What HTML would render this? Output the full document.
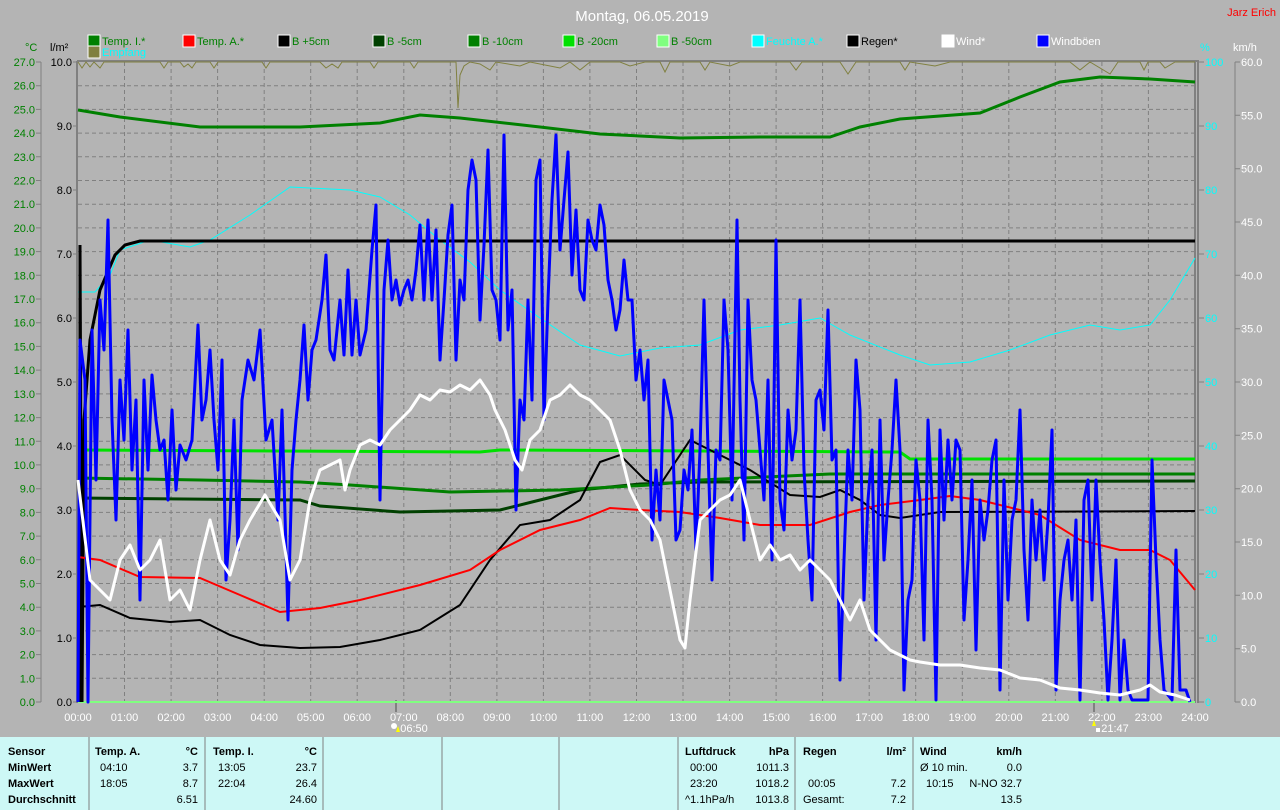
<!DOCTYPE html>
<html><head><meta charset="utf-8"><style>
html,body{margin:0;padding:0;background:#b4b4b4;}
svg{display:block;font-family:"Liberation Sans",Arial,sans-serif;}
</style></head><body>
<svg width="1280" height="810" viewBox="0 0 1280 810" xmlns="http://www.w3.org/2000/svg">
<rect width="1280" height="810" fill="#b4b4b4"/>
<text x="642" y="21" fill="#fff" font-size="15" text-anchor="middle">Montag, 06.05.2019</text>
<text x="1276" y="16" fill="#f00" font-size="11" text-anchor="end">Jarz Erich</text>
<g font-size="11">
<rect x="88" y="35" width="12" height="12" fill="#008000" stroke="#fff"/><text x="102" y="45" fill="#008000">Temp. I.*</text>
<rect x="183" y="35" width="12" height="12" fill="#f00" stroke="#fff"/><text x="197" y="45" fill="#008000">Temp. A.*</text>
<rect x="278" y="35" width="12" height="12" fill="#000" stroke="#fff"/><text x="292" y="45" fill="#008000">B +5cm</text>
<rect x="373" y="35" width="12" height="12" fill="#004000" stroke="#fff"/><text x="387" y="45" fill="#008000">B -5cm</text>
<rect x="468" y="35" width="12" height="12" fill="#008000" stroke="#fff"/><text x="482" y="45" fill="#008000">B -10cm</text>
<rect x="563" y="35" width="12" height="12" fill="#00e000" stroke="#fff"/><text x="577" y="45" fill="#008000">B -20cm</text>
<rect x="657" y="35" width="12" height="12" fill="#80ff80" stroke="#fff"/><text x="671" y="45" fill="#008000">B -50cm</text>
<rect x="752" y="35" width="12" height="12" fill="#0ff" stroke="#fff"/><text x="766" y="45" fill="#0ff">Feuchte A.*</text>
<rect x="847" y="35" width="12" height="12" fill="#000" stroke="#fff"/><text x="861" y="45" fill="#000">Regen*</text>
<rect x="942" y="35" width="12" height="12" fill="#fff" stroke="#fff"/><text x="956" y="45" fill="#fff">Wind*</text>
<rect x="1037" y="35" width="12" height="12" fill="#00f" stroke="#fff"/><text x="1051" y="45" fill="#fff">Windböen</text>
<rect x="88" y="46" width="12" height="12" fill="#808040" stroke="#fff"/><text x="102" y="56" fill="#0ff">Empfang</text>
<text x="25" y="51" fill="#008000">°C</text>
<text x="50" y="51" fill="#000">l/m²</text>
<text x="1200" y="51" fill="#0ff">%</text>
<text x="1233" y="51" fill="#fff">km/h</text>
</g>
<!-- axes lines -->
<path d="M41 62V702M1235 62V702" stroke="#808080" stroke-width="1"/>
<path d="M36 62h5M36 85.7h5M36 109.4h5M36 133.1h5M36 156.8h5M36 180.5h5M36 204.2h5M36 227.9h5M36 251.6h5M36 275.3h5M36 299h5M36 322.7h5M36 346.4h5M36 370.1h5M36 393.9h5M36 417.6h5M36 441.3h5M36 464.9h5M36 488.7h5M36 512.4h5M36 536.1h5M36 559.8h5M36 583.5h5M36 607.2h5M36 630.9h5M36 654.6h5M36 678.3h5M36 702h5M1235 62h5M1235 115.3h5M1235 168.7h5M1235 222h5M1235 275.3h5M1235 328.7h5M1235 382h5M1235 435.3h5M1235 488.7h5M1235 542h5M1235 595.3h5M1235 648.7h5M1235 702h5M73 62h4M73 126h4M73 190h4M73 254h4M73 318h4M73 382h4M73 446h4M73 510h4M73 574h4M73 638h4M73 702h4M1199 62h5M1199 126h5M1199 190h5M1199 254h5M1199 318h5M1199 382h5M1199 446h5M1199 510h5M1199 574h5M1199 638h5M1199 702h5" stroke="#808080"/>
<g font-size="11" fill="#008000" text-anchor="end">
<text x="35" y="66">27.0</text><text x="35" y="89.7">26.0</text><text x="35" y="113.4">25.0</text><text x="35" y="137.1">24.0</text><text x="35" y="160.8">23.0</text><text x="35" y="184.5">22.0</text><text x="35" y="208.2">21.0</text><text x="35" y="231.9">20.0</text><text x="35" y="255.6">19.0</text><text x="35" y="279.3">18.0</text><text x="35" y="303">17.0</text><text x="35" y="326.7">16.0</text><text x="35" y="350.4">15.0</text><text x="35" y="374.1">14.0</text><text x="35" y="397.9">13.0</text><text x="35" y="421.6">12.0</text><text x="35" y="445.3">11.0</text><text x="35" y="468.9">10.0</text><text x="35" y="492.7">9.0</text><text x="35" y="516.4">8.0</text><text x="35" y="540.1">7.0</text><text x="35" y="563.8">6.0</text><text x="35" y="587.5">5.0</text><text x="35" y="611.2">4.0</text><text x="35" y="634.9">3.0</text><text x="35" y="658.6">2.0</text><text x="35" y="682.3">1.0</text><text x="35" y="706">0.0</text>
</g>
<g font-size="11" fill="#000" text-anchor="end">
<text x="72" y="66">10.0</text><text x="72" y="130">9.0</text><text x="72" y="194">8.0</text><text x="72" y="258">7.0</text><text x="72" y="322">6.0</text><text x="72" y="386">5.0</text><text x="72" y="450">4.0</text><text x="72" y="514">3.0</text><text x="72" y="578">2.0</text><text x="72" y="642">1.0</text><text x="72" y="706">0.0</text>
</g>
<g font-size="11" fill="#0ff">
<text x="1205" y="66">100</text><text x="1205" y="130">90</text><text x="1205" y="194">80</text><text x="1205" y="258">70</text><text x="1205" y="322">60</text><text x="1205" y="386">50</text><text x="1205" y="450">40</text><text x="1205" y="514">30</text><text x="1205" y="578">20</text><text x="1205" y="642">10</text><text x="1205" y="706">0</text>
</g>
<g font-size="11" fill="#fff">
<text x="1241" y="66">60.0</text><text x="1241" y="119.3">55.0</text><text x="1241" y="172.7">50.0</text><text x="1241" y="226">45.0</text><text x="1241" y="279.3">40.0</text><text x="1241" y="332.7">35.0</text><text x="1241" y="386">30.0</text><text x="1241" y="439.3">25.0</text><text x="1241" y="492.7">20.0</text><text x="1241" y="546">15.0</text><text x="1241" y="599.3">10.0</text><text x="1241" y="652.7">5.0</text><text x="1241" y="706">0.0</text>
</g>
<!-- grid -->
<path d="M78 85.7H1195M78 109.4H1195M78 133.1H1195M78 156.8H1195M78 180.5H1195M78 204.2H1195M78 227.9H1195M78 251.6H1195M78 275.3H1195M78 299H1195M78 322.7H1195M78 346.4H1195M78 370.1H1195M78 393.9H1195M78 417.6H1195M78 441.3H1195M78 464.9H1195M78 488.7H1195M78 512.4H1195M78 536.1H1195M78 559.8H1195M78 583.5H1195M78 607.2H1195M78 630.9H1195M78 654.6H1195M78 678.3H1195M124.5 62V702M171.1 62V702M217.6 62V702M264.2 62V702M310.7 62V702M357.2 62V702M403.8 62V702M450.3 62V702M496.9 62V702M543.4 62V702M589.9 62V702M636.5 62V702M683 62V702M729.6 62V702M776.1 62V702M822.6 62V702M869.2 62V702M915.7 62V702M962.3 62V702M1008.8 62V702M1055.3 62V702M1101.9 62V702M1148.4 62V702" stroke="#808080" stroke-dasharray="4,3" fill="none"/>
<path d="M77 61H1198V703M77 61V703M1195 61V703" stroke="#808080" stroke-width="2" fill="none"/>
<!-- x labels -->
<g font-size="11" fill="#fff" text-anchor="middle">
<text x="78" y="721">00:00</text><text x="124.5" y="721">01:00</text><text x="171.1" y="721">02:00</text><text x="217.6" y="721">03:00</text><text x="264.2" y="721">04:00</text><text x="310.7" y="721">05:00</text><text x="357.2" y="721">06:00</text><text x="403.8" y="721">07:00</text><text x="450.3" y="721">08:00</text><text x="496.9" y="721">09:00</text><text x="543.4" y="721">10:00</text><text x="589.9" y="721">11:00</text><text x="636.5" y="721">12:00</text><text x="683" y="721">13:00</text><text x="729.6" y="721">14:00</text><text x="776.1" y="721">15:00</text><text x="822.6" y="721">16:00</text><text x="869.2" y="721">17:00</text><text x="915.7" y="721">18:00</text><text x="962.3" y="721">19:00</text><text x="1008.8" y="721">20:00</text><text x="1055.3" y="721">21:00</text><text x="1101.9" y="721">22:00</text><text x="1148.4" y="721">23:00</text><text x="1195" y="721">24:00</text>
<text x="414" y="732">06:50</text><text x="1115" y="732">21:47</text>
</g>
<path d="M396 700V712M1094 700V712" stroke="#808080" stroke-width="2"/>
<circle cx="394" cy="726" r="3" fill="#fff"/><path d="M396 732l2-6 2 6z" fill="#ff0"/>
<path d="M1092 726l2-6 2 6z" fill="#ff0"/><rect x="1096" y="728" width="4" height="4" fill="#fff"/>
<!-- curves -->
<path d="M78 702H1195" stroke="#80ff80" stroke-width="2"/>
<polyline fill="none" stroke="#808040" stroke-width="1" points="78,62 82,68 86,62 90,67 94,62 100,68 104,62 160,62 164,68 168,62 180,62 184,67 188,64 192,68 196,62 210,62 214,68 218,62 262,62 266,68 270,62 320,62 326,68 332,64 338,68 342,62 370,62 374,68 378,62 410,62 414,68 418,62 456,62 458,108 460,75 464,66 470,62 480,64 490,70 496,62 520,66 530,62 560,68 570,62 580,70 590,62 620,62 630,66 645,62 660,62 665,72 670,62 700,62 705,70 710,62 730,66 740,62 790,62 796,70 802,62 840,62 848,74 856,62 900,62 905,70 910,62 935,66 950,62 1070,62 1080,70 1090,62 1110,74 1118,62 1140,62 1144,70 1148,62 1160,62 1165,68 1175,62 1195,62"/>
<polyline fill="none" stroke="#0ff" stroke-width="1" points="78,292 95,292 110,275 120,250 150,240 190,247 210,240 250,215 290,187 350,190 380,197 410,215 440,240 470,262 500,290 540,318 580,345 620,356 660,348 700,345 740,330 780,325 820,318 850,335 900,355 930,365 970,362 1010,350 1050,335 1090,325 1120,330 1150,325 1170,300 1195,258"/>
<polyline fill="none" stroke="#008000" stroke-width="3" points="78,110 120,117 200,127 300,127 380,123 420,115 460,118 540,127 600,134 680,138 760,137 830,137 860,127 900,119 980,113 1020,97 1060,82 1100,77 1150,79 1195,82"/>
<polyline fill="none" stroke="#00e000" stroke-width="3" points="78,450 480,452 500,450 900,452 910,459 1195,459"/>
<polyline fill="none" stroke="#004000" stroke-width="3" points="78,498 300,500 320,506 400,512 500,510 540,500 580,490 640,484 700,482 1195,481"/>
<polyline fill="none" stroke="#008000" stroke-width="3" points="78,478 200,480 300,482 350,485 450,492 560,490 650,485 700,480 830,474 1195,474"/>
<polyline fill="none" stroke="#000" stroke-width="3" points="80,702 80,245 82,702 84,420 90,340 100,290 115,255 125,245 140,241 1195,241"/>
<polyline fill="none" stroke="#000" stroke-width="2" points="78,607 100,605 130,618 170,622 200,620 230,635 260,645 300,648 340,647 380,640 420,630 460,605 490,560 520,525 550,520 580,500 600,462 620,455 645,480 660,485 690,440 720,455 750,470 790,495 820,497 840,490 860,500 880,515 900,518 940,512 1195,511"/>
<polyline fill="none" stroke="#f00" stroke-width="2" points="78,557 100,560 140,577 200,578 240,595 280,612 320,608 360,600 420,585 470,570 500,550 540,530 580,520 610,508 640,510 680,512 720,518 760,525 810,525 850,512 880,505 920,500 950,496 980,500 1040,515 1080,540 1120,550 1150,550 1170,560 1195,590"/>
<polyline fill="none" stroke="#00f" stroke-width="3" stroke-linejoin="round" points="78,702 80,340 85,380 88,702 92,330 96,480 100,300 104,350 108,220 112,420 116,520 120,380 124,440 128,330 132,470 136,400 140,600 144,380 148,470 152,375 156,420 160,450 164,440 168,500 172,410 176,490 180,445 186,460 192,440 198,325 202,420 206,400 210,350 214,420 218,470 222,360 226,580 230,520 234,420 238,550 242,400 248,360 254,380 260,330 266,440 272,420 278,520 282,410 288,620 292,470 296,420 300,380 304,325 308,400 312,350 316,340 322,300 326,255 330,350 334,360 340,300 344,355 348,270 352,355 356,300 360,355 366,330 372,250 376,205 380,500 384,290 388,240 392,300 396,280 400,305 404,290 408,280 412,300 416,270 420,225 424,300 428,220 432,300 436,230 440,360 444,300 448,235 452,205 456,360 460,280 464,300 468,190 472,160 476,180 480,320 484,245 488,150 492,290 496,300 500,340 504,135 508,330 512,290 516,510 520,400 524,420 528,300 532,400 536,180 540,160 544,420 548,300 552,200 556,135 560,250 564,200 568,152 572,275 576,210 580,290 584,300 588,220 592,240 596,250 600,205 604,225 608,280 612,300 616,330 620,310 624,260 628,300 632,300 636,380 640,350 644,400 648,360 652,540 656,470 660,520 664,380 668,400 672,420 676,540 680,530 684,470 688,490 692,430 696,550 700,450 704,300 708,450 712,580 716,450 720,460 724,300 728,350 732,500 737,220 740,400 744,540 748,300 752,380 756,400 760,450 764,500 768,380 772,560 776,240 780,500 784,530 788,410 792,460 796,430 800,300 804,470 808,540 812,600 816,400 820,390 824,430 828,310 832,460 836,450 840,680 844,560 848,450 852,500 856,360 860,410 864,600 868,500 872,450 876,640 880,420 884,560 888,500 892,450 896,380 900,450 904,690 908,600 912,580 916,460 920,500 924,640 928,420 932,500 936,700 940,430 944,520 948,440 952,500 956,440 960,450 964,620 968,560 972,480 976,650 980,500 984,540 988,510 992,460 996,440 1000,690 1004,480 1008,600 1012,520 1016,500 1020,410 1024,550 1028,620 1032,500 1036,560 1040,510 1044,580 1048,520 1052,430 1056,690 1060,600 1064,560 1068,540 1072,600 1076,520 1080,700 1084,500 1088,480 1092,600 1096,480 1100,560 1104,620 1108,700 1112,640 1116,560 1120,700 1124,640 1128,690 1132,700 1148,700 1152,460 1156,560 1160,640 1164,690 1172,700 1176,550 1180,690 1186,690 1190,702"/>
<polyline fill="none" stroke="#fff" stroke-width="3" stroke-linejoin="round" points="78,480 90,580 100,590 110,600 120,560 130,545 140,570 150,560 160,540 170,600 180,590 190,610 200,560 210,520 220,560 230,575 240,540 250,520 265,495 280,520 290,580 300,560 310,500 320,470 330,465 340,460 345,490 350,470 360,445 370,440 380,445 390,430 400,420 410,410 420,395 430,400 440,390 450,392 460,385 470,390 480,380 490,395 495,410 505,430 515,460 522,470 530,440 540,430 550,400 560,395 570,385 580,395 590,400 600,410 610,420 620,450 630,490 640,510 650,520 660,540 670,590 680,640 685,648 690,600 700,520 710,510 720,500 730,495 740,480 750,520 760,560 770,545 780,560 790,555 800,570 810,560 820,570 830,580 840,600 850,620 860,600 870,630 880,640 890,650 900,655 910,660 920,662 940,665 960,665 980,668 1000,670 1020,678 1040,680 1060,688 1080,690 1100,693 1120,695 1140,690 1150,685 1160,692 1175,695 1190,700"/>
<!-- table -->
<rect x="0" y="737" width="1280" height="73" fill="#cdf8f6"/>
<path d="M89 737V810M205 737V810M323 737V810M442 737V810M559 737V810M678 737V810M795 737V810M913 737V810" stroke="#808080"/>
<g font-size="11" fill="#000">
<g font-weight="bold"><text x="8" y="755">Sensor</text><text x="8" y="771">MinWert</text><text x="8" y="787">MaxWert</text><text x="8" y="803">Durchschnitt</text>
<text x="95" y="755">Temp. A.</text><text x="198" y="755" text-anchor="end">°C</text>
<text x="213" y="755">Temp. I.</text><text x="317" y="755" text-anchor="end">°C</text>
<text x="685" y="755">Luftdruck</text><text x="789" y="755" text-anchor="end">hPa</text>
<text x="803" y="755">Regen</text><text x="906" y="755" text-anchor="end">l/m²</text>
<text x="920" y="755">Wind</text><text x="1022" y="755" text-anchor="end">km/h</text></g>
<text x="100" y="771">04:10</text><text x="198" y="771" text-anchor="end">3.7</text>
<text x="100" y="787">18:05</text><text x="198" y="787" text-anchor="end">8.7</text>
<text x="198" y="803" text-anchor="end">6.51</text>
<text x="218" y="771">13:05</text><text x="317" y="771" text-anchor="end">23.7</text>
<text x="218" y="787">22:04</text><text x="317" y="787" text-anchor="end">26.4</text>
<text x="317" y="803" text-anchor="end">24.60</text>
<text x="690" y="771">00:00</text><text x="789" y="771" text-anchor="end">1011.3</text>
<text x="690" y="787">23:20</text><text x="789" y="787" text-anchor="end">1018.2</text>
<text x="685" y="803">^1.1hPa/h</text><text x="789" y="803" text-anchor="end">1013.8</text>
<text x="808" y="787">00:05</text><text x="906" y="787" text-anchor="end">7.2</text>
<text x="803" y="803">Gesamt:</text><text x="906" y="803" text-anchor="end">7.2</text>
<text x="920" y="771">Ø 10 min.</text><text x="1022" y="771" text-anchor="end">0.0</text>
<text x="926" y="787">10:15</text><text x="1022" y="787" text-anchor="end">N-NO 32.7</text>
<text x="1022" y="803" text-anchor="end">13.5</text>
</g>
</svg>
</body></html>
